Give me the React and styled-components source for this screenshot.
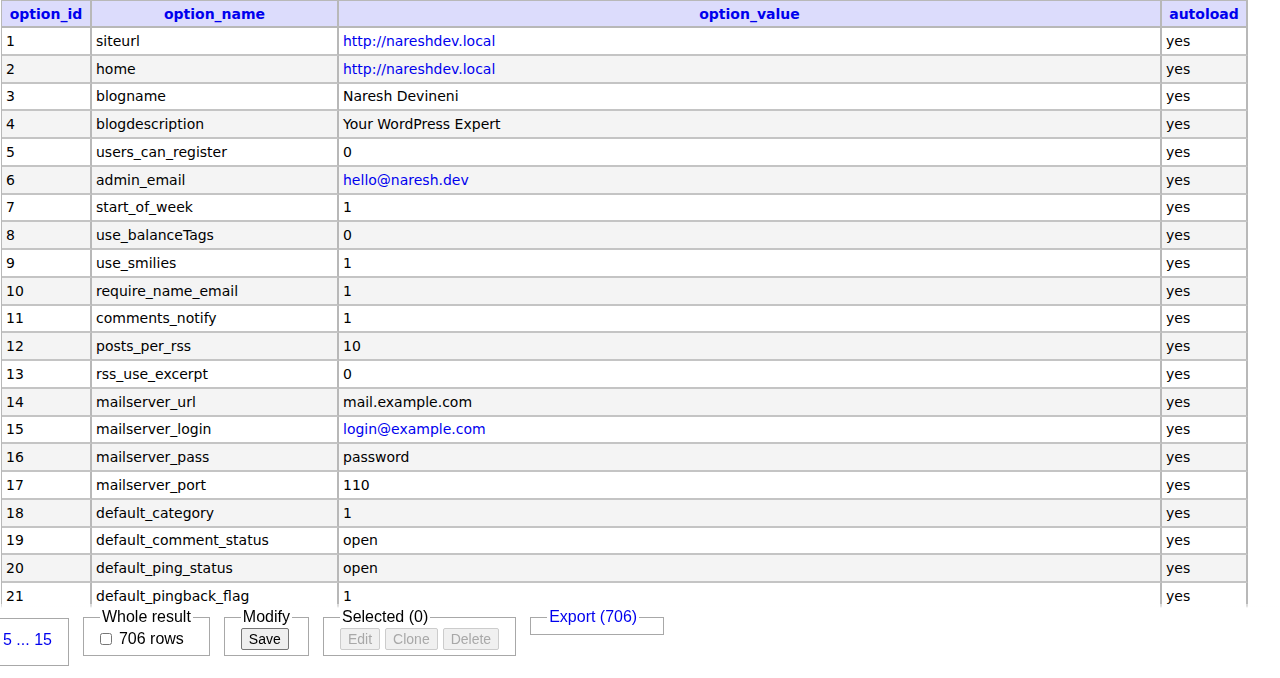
import React from "react";
import styled, { createGlobalStyle } from "styled-components";

const Global = createGlobalStyle`
  html, body { margin: 0; padding: 0; background: #fff; overflow: hidden; height: 678px; }
  body { font-family: "DejaVu Sans", Verdana, sans-serif; font-size: 14px; color: #000; }
`;

const Table = styled.table`
  border-collapse: separate;
  border-spacing: 0;
  width: 1247px;
  margin-left: 1px;
  border-left: 1px solid #b8b8b8;
`;
const Th = styled.th`
  background: #dcdcfc;
  color: #0000ee;
  font-weight: bold;
  font-size: 14px;
  height: 25px;
  padding: 0 4px;
  border-right: 2px solid #b8b8b8;
  border-bottom: 2px solid #b8b8b8;
  border-top: 1px solid #b8b8b8;
  text-align: center;
  width: ${p => p.$w || "auto"};
`;
const Tr = styled.tr`
  background: ${p => (p.$alt ? "#f4f4f4" : "#fff")};
`;
const Td = styled.td`
  height: 25.75px;
  padding: 0 4px;
  border-right: 2px solid #b8b8b8;
  border-bottom: 2px solid #c4c4c4;
  white-space: nowrap;
  color: ${p => (p.$link ? "#0000ee" : "#000")};
`;

const Footer = styled.div`
  position: fixed;
  left: 0; right: 0; bottom: 0;
  height: 74px;
  background: linear-gradient(to bottom, rgba(255,255,255,0.5) 0px, rgba(255,255,255,0.5) 2px, #fff 4px);
  display: flex;
  align-items: flex-start;
  gap: 14px;
  padding-top: 4px;
  box-sizing: border-box;
  font-family: "Liberation Sans", Arial, sans-serif;
`;
const Fieldset = styled.fieldset`
  margin: 0;
  border: 1px solid #a8a8a8;
  padding: 2px 16px 6px;
  height: ${p => p.$h || "38px"};
  box-sizing: content-box;
  display: flex;
  align-items: center;
  gap: 5px;
  font-size: 16px;
  margin-left: ${p => p.$ml || "0"};
  min-width: ${p => p.$mw || "0"};
`;
const Legend = styled.legend`
  padding: 0 2px;
  font-size: 16px;
  color: ${p => (p.$link ? "#0000ee" : "#000")};
`;
const Link = styled.span`
  color: #0000ee;
  font-size: 16px;
`;
const Btn = styled.button`
  font-family: "Liberation Sans", Arial, sans-serif;
  font-size: 14px;
  padding: 2px 7px;
  border: 1px solid ${p => (p.disabled ? "#ccc" : "#767676")};
  border-radius: 2px;
  background: ${p => (p.disabled ? "#f0f0f0" : "#efefef")};
  color: ${p => (p.disabled ? "#a8a8a8" : "#000")};
`;
const Check = styled.input`
  margin: 0 2px 0 0;
  width: 12px; height: 12px;
`;

const rows = [
  ["siteurl", "http://nareshdev.local", 1],
  ["home", "http://nareshdev.local", 1],
  ["blogname", "Naresh Devineni"],
  ["blogdescription", "Your WordPress Expert"],
  ["users_can_register", "0"],
  ["admin_email", "hello@naresh.dev", 1],
  ["start_of_week", "1"],
  ["use_balanceTags", "0"],
  ["use_smilies", "1"],
  ["require_name_email", "1"],
  ["comments_notify", "1"],
  ["posts_per_rss", "10"],
  ["rss_use_excerpt", "0"],
  ["mailserver_url", "mail.example.com"],
  ["mailserver_login", "login@example.com", 1],
  ["mailserver_pass", "password"],
  ["mailserver_port", "110"],
  ["default_category", "1"],
  ["default_comment_status", "open"],
  ["default_ping_status", "open"],
  ["default_pingback_flag", "1"],
];

export default function App() {
  return (
    <>
      <Global />
      <Table>
        <thead>
          <tr>
            <Th $w="80px">option_id</Th>
            <Th $w="237px">option_name</Th>
            <Th>option_value</Th>
            <Th $w="76px">autoload</Th>
          </tr>
        </thead>
        <tbody>
          {rows.map((r, i) => (
            <Tr key={i} $alt={i % 2 === 1}>
              <Td>{i + 1}</Td>
              <Td>{r[0]}</Td>
              <Td $link={r[2]}>{r[1]}</Td>
              <Td>yes</Td>
            </Tr>
          ))}
        </tbody>
      </Table>
      <Footer>
        <Fieldset $ml="-14px" $h="38px" style={{ marginTop: 10 }}><Link>5 ... 15</Link></Fieldset>
        <Fieldset>
          <Legend>Whole result</Legend>
          <Check type="checkbox" />
          <span>706 rows</span>
        </Fieldset>
        <Fieldset>
          <Legend>Modify</Legend>
          <Btn>Save</Btn>
        </Fieldset>
        <Fieldset>
          <Legend>Selected (0)</Legend>
          <Btn disabled>Edit</Btn>
          <Btn disabled>Clone</Btn>
          <Btn disabled>Delete</Btn>
        </Fieldset>
        <Fieldset $h="16px" $mw="100px">
          <Legend $link>Export (706)</Legend>
        </Fieldset>
      </Footer>
    </>
  );
}
